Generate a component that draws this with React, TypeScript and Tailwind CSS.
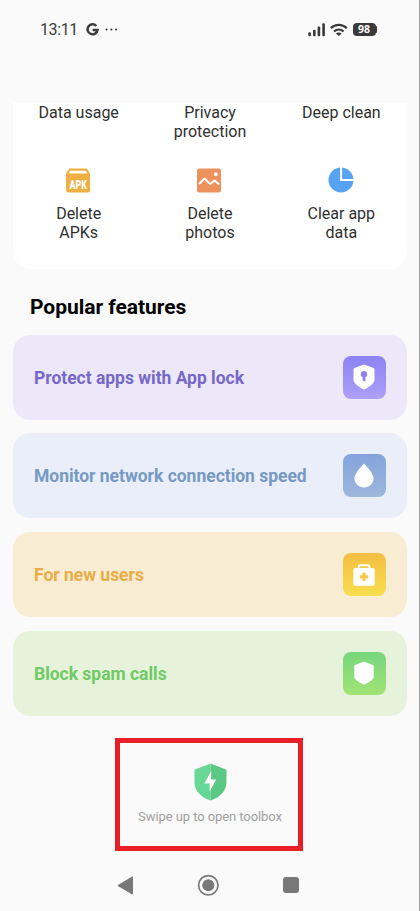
import type { ReactNode } from "react";

type Tool = { lines: string[]; icon?: ReactNode };

const TOOLS: Tool[] = [
  { lines: ["Delete", "APKs"], icon: <ApkIcon /> },
  { lines: ["Delete", "photos"], icon: <PhotoIcon /> },
  { lines: ["Clear app", "data"], icon: <PieIcon /> },
];

const FEATURES = [
  {
    label: "Protect apps with App lock",
    card: "bg-[#ece8fa] text-[#7768c8]",
    tile: "from-[#8b83f3] to-[#ae9ff8]",
    icon: <LockShieldIcon />,
  },
  {
    label: "Monitor network connection speed",
    card: "bg-[#e9eef8] text-[#7799c4]",
    tile: "from-[#84a3dc] to-[#9db8dc]",
    icon: <DropIcon />,
  },
  {
    label: "For new users",
    card: "bg-[#f8edd3] text-[#e9ac47]",
    tile: "from-[#f3be42] to-[#f8de50]",
    icon: <KitIcon />,
  },
  {
    label: "Block spam calls",
    card: "bg-[#e6f3da] text-[#70ca66]",
    tile: "from-[#76d67c] to-[#a0e374]",
    icon: <ShieldIcon />,
  },
];

export default function App() {
  return (
    <div className="flex h-[911px] w-[420px] flex-col overflow-hidden border-r border-[#a3a3a3] bg-[#fafafa] font-['Roboto',sans-serif] text-[#303030]">
      <StatusBar />

      <main className="flex flex-col pr-3 pl-[13px]">
        <section className="h-[166px] rounded-b-[18px] bg-white">
          <div className="grid h-[60.5px] grid-cols-3 text-center text-[16px] leading-[19px]">
            <p>Data usage</p>
            <p>
              Privacy
              <br />
              protection
            </p>
            <p>Deep clean</p>
          </div>
          <div className="grid grid-cols-3 text-center text-[16px] leading-[19px]">
            {TOOLS.map((tool) => (
              <div key={tool.lines.join(" ")} className="flex flex-col items-center">
                <div className="mr-px flex h-[33px] w-8 items-center justify-center">{tool.icon}</div>
                <p className="mt-[7.5px]">
                  {tool.lines[0]}
                  <br />
                  {tool.lines[1]}
                </p>
              </div>
            ))}
          </div>
        </section>

        <h2 className="mt-[26px] pl-[17px] text-[21px] leading-[25px] font-bold tracking-[-0.04px] text-black">
          Popular features
        </h2>

        <div className="mt-[14.5px] flex flex-col gap-[13.4px]">
          {FEATURES.map((f) => (
            <div
              key={f.label}
              className={`flex h-[85.3px] items-center justify-between rounded-[17px] pr-[21.5px] pl-[21px] ${f.card}`}
            >
              <span className="pt-px text-[17.5px] font-bold tracking-[-0.02px]">{f.label}</span>
              <span
                className={`flex size-[43px] items-center justify-center rounded-[8px] bg-linear-to-b ${f.tile}`}
              >
                {f.icon}
              </span>
            </div>
          ))}
        </div>
      </main>

      <div className="mt-[22px] ml-[115px] flex h-[113px] w-[188px] flex-col items-center border-[5.5px] border-[#e81f27]">
        <svg className="mt-[20.5px] ml-[2px]" width="33" height="38" viewBox="0 0 33 38">
          <path d="M16.5 0.5 L0.5 6.7 V19.5 C0.5 28 7.5 34.6 16.5 37.5 Z" fill="#66d794" />
          <path d="M16.5 0.5 L32.5 6.7 V19.5 C32.5 28 25.5 34.6 16.5 37.5 Z" fill="#5bc883" />
          <path d="M17.2 8 L10.3 20.4 H15.6 V28.4 L22.3 16.4 H17.2 Z" fill="#fff" />
        </svg>
        <p className="mt-[8px] ml-[2px] text-[13px] leading-4 tracking-[-0.08px] whitespace-nowrap text-[#a0a0a0]">
          Swipe up to open toolbox
        </p>
      </div>

      <NavBar />
    </div>
  );
}

function StatusBar() {
  return (
    <header className="flex h-[103px] shrink-0 items-start pt-[20px] pr-[42px] pl-[40px]">
      <div className="flex h-5 items-center text-[#3c3c3c]">
        <span className="text-[16px] leading-5 tracking-[-0.4px]">13:11</span>
        <svg className="mb-px ml-[8px]" width="13" height="13" viewBox="0 0 13 13" fill="none">
          <path d="M10.3 3 A5 5 0 1 0 11.5 7 H6.7" stroke="currentColor" strokeWidth="2.5" />
        </svg>
        <svg className="mb-px ml-[6px]" width="13" height="3" viewBox="0 0 13 3" fill="currentColor">
          <circle cx="1.6" cy="1.5" r="1.1" />
          <circle cx="6.4" cy="1.5" r="1.1" />
          <circle cx="11.1" cy="1.5" r="1.1" />
        </svg>
      </div>
      <div className="ml-auto flex h-[19px] items-center text-[#3a3a3a]">
        <svg width="18" height="14" viewBox="0 0 18 14" fill="currentColor">
          <rect x="0.3" y="9.2" width="2.6" height="4.1" rx="1" />
          <rect x="5" y="6.7" width="2.6" height="6.6" rx="1" />
          <rect x="9.6" y="3.5" width="2.6" height="9.8" rx="1" />
          <rect x="14.3" y="0.3" width="2.6" height="13" rx="1" />
        </svg>
        <svg className="ml-[4px]" width="18" height="14" viewBox="0 0 18 14" fill="none">
          <path d="M0.8 5.1 C5.4 0.7 12.2 0.7 16.8 5.1" stroke="currentColor" strokeWidth="2.2" />
          <path d="M4 8.6 C6.8 5.9 10.8 5.9 13.6 8.6" stroke="currentColor" strokeWidth="2.1" />
          <path d="M8.8 13 L5.9 10.5 C7.6 9.1 10 9.1 11.7 10.5 Z" fill="currentColor" />
        </svg>
        <span className="ml-[5px] flex h-[13px] w-[23px] items-center justify-center rounded-[4px] bg-[#3a3a3a] font-['Noto_Sans',sans-serif] text-[10.5px] leading-none font-bold text-white">
          98
        </span>
        <span className="h-[7px] w-[1.5px] rounded-r-full bg-[#3a3a3a]" />
      </div>
    </header>
  );
}

function NavBar() {
  return (
    <nav className="mt-[23px] flex h-[23px] items-center pl-[117px] text-[#787878]">
      <svg width="17" height="19" viewBox="0 0 17 19" fill="currentColor">
        <path d="M1.4 8.8 L14.7 0.8 Q16 0.2 16 1.6 V17.4 Q16 18.8 14.7 18.2 L1.4 10.2 Q0.4 9.5 1.4 8.8 Z" />
      </svg>
      <svg className="ml-[63px]" width="23" height="23" viewBox="0 0 23 23">
        <circle cx="11.3" cy="11.3" r="9.7" fill="none" stroke="currentColor" strokeWidth="1.7" />
        <circle cx="11.3" cy="11.3" r="6" fill="currentColor" />
      </svg>
      <span className="ml-[62.5px] size-4 rounded-[3px] bg-[#787878]" />
    </nav>
  );
}

function ApkIcon() {
  return (
    <svg className="overflow-visible" width="24" height="25" viewBox="0 0 24 25">
      <path d="M3.4 0.5 H20.6 L24 5.5 V22 Q24 24.5 21.5 24.5 H2.5 Q0 24.5 0 22 V5.5 Z" fill="#f0b041" />
      <path d="M4.3 2.7 H19.7 L21.3 5.5 H2.7 Z" fill="#fff" />
      <text
        transform="translate(12.2 21) scale(0.7 1)"
        textAnchor="middle"
        fontFamily="Roboto, sans-serif"
        fontSize="12.5"
        fontWeight="900"
        fill="#fff"
      >
        APK
      </text>
    </svg>
  );
}

function PhotoIcon() {
  return (
    <svg width="24" height="25" viewBox="0 0 24 25">
      <rect y="0.5" width="24" height="24" rx="2.5" fill="#ee925d" />
      <circle cx="18.8" cy="6.2" r="1.9" fill="#fff" />
      <path
        d="M2 16 L6.8 11.3 Q7.7 10.5 8.6 11.4 L12.4 15.2 Q13.3 16.1 14.3 15.2 L16.2 13.5 Q17.6 12.3 18.9 13.5 L22 16.4"
        fill="none"
        stroke="#fff"
        strokeWidth="2.1"
      />
    </svg>
  );
}

function PieIcon() {
  return (
    <svg width="26" height="26" viewBox="0 0 26 26">
      <circle cx="13" cy="13" r="12.5" fill="#57a3f2" />
      <path d="M13.1 0 V12.9 H26" fill="none" stroke="#fff" strokeWidth="2" />
    </svg>
  );
}

function LockShieldIcon() {
  return (
    <svg width="22" height="26" viewBox="0 0 22 26">
      <path
        d="M11 0.6 L20.5 4 Q21.5 4.4 21.5 5.5 V15.5 C21.5 19.3 17 22.8 11 25.4 C5 22.8 0.5 19.3 0.5 15.5 V5.5 Q0.5 4.4 1.5 4 Z"
        fill="#fff"
      />
      <circle cx="11" cy="10.2" r="3.2" fill="#9082ee" />
      <path d="M9.6 11 H12.4 V17.3 H10.6 L9.6 16.3 Z" fill="#9082ee" />
    </svg>
  );
}

function DropIcon() {
  return (
    <svg width="20" height="25" viewBox="0 0 20 25">
      <path
        d="M10 0.6 C12.2 3.5 19.5 10.2 19.5 15.4 C19.5 20.5 15.3 24.4 10 24.4 C4.7 24.4 0.5 20.5 0.5 15.4 C0.5 10.2 7.8 3.5 10 0.6 Z"
        fill="#fff"
      />
    </svg>
  );
}

function KitIcon() {
  return (
    <svg width="22" height="22" viewBox="0 0 22 22">
      <path d="M5.8 5 V2.8 Q5.8 1.3 7.3 1.3 H14.9 Q16.4 1.3 16.4 2.8 V5" fill="none" stroke="#fff" strokeWidth="2" />
      <rect x="0.3" y="4" width="21.4" height="17.8" rx="2" fill="#fff" />
      <path d="M11 8.7 V17.1 M6.8 12.9 H15.2" stroke="#f5cc49" strokeWidth="3.2" />
    </svg>
  );
}

function ShieldIcon() {
  return (
    <svg width="20" height="24" viewBox="0 0 20 24">
      <path
        d="M10 0.4 L18.9 4 Q19.7 4.4 19.7 5.3 V15.5 C19.7 18.4 15.5 21.2 10 23.7 C4.5 21.2 0.3 18.4 0.3 15.5 V5.3 Q0.3 4.4 1.1 4 Z"
        fill="#fff"
      />
    </svg>
  );
}
